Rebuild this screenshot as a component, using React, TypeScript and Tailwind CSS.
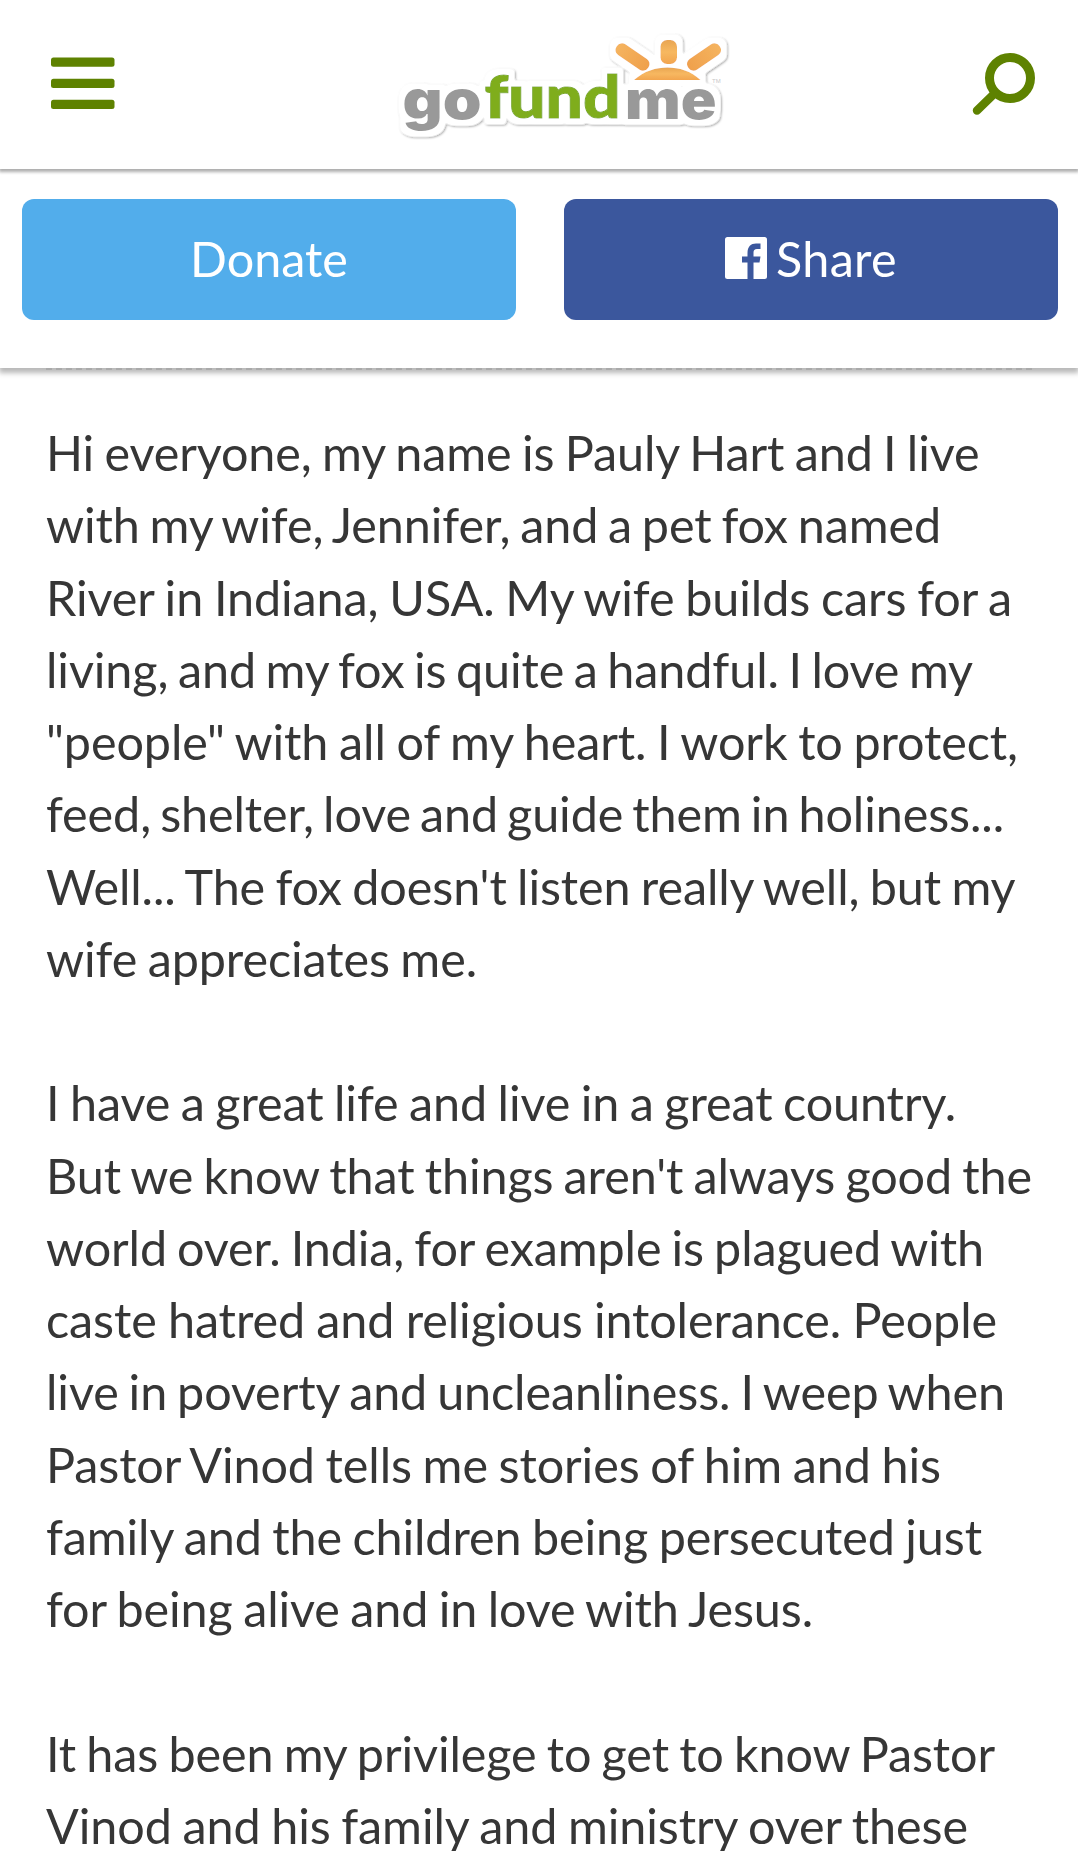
import React from "react";

interface StoryLine {
  text: string;
  width: number;
}

const STORY: StoryLine[][] = [
  [
    { text: "Hi everyone, my name is Pauly Hart and I live", width: 933.5 },
    { text: "with my wife, Jennifer, and a pet fox named", width: 895 },
    { text: "River in Indiana, USA. My wife builds cars for a", width: 966 },
    { text: "living, and my fox is quite a handful. I love my", width: 927 },
    { text: '"people" with all of my heart. I work to protect,', width: 972 },
    { text: "feed, shelter, love and guide them in holiness...", width: 958 },
    { text: "Well... The fox doesn't listen really well, but my", width: 969.5 },
    { text: "wife appreciates me.", width: 431 },
  ],
  [
    { text: "I have a great life and live in a great country.", width: 910 },
    { text: "But we know that things aren't always good the", width: 986 },
    { text: "world over. India, for example is plagued with", width: 938 },
    { text: "caste hatred and religious intolerance. People", width: 951 },
    { text: "live in poverty and uncleanliness. I weep when", width: 959 },
    { text: "Pastor Vinod tells me stories of him and his", width: 895 },
    { text: "family and the children being persecuted just", width: 936 },
    { text: "for being alive and in love with Jesus.", width: 767 },
  ],
  [
    { text: "It has been my privilege to get to know Pastor", width: 949 },
    { text: "Vinod and his family and ministry over these", width: 922 },
  ],
];

const MenuIcon = () => (
  <svg width="64" height="53" viewBox="0 0 64 53" fill="#5e8200">
    <rect y="0.5" width="63.500" height="9.2" rx="2.5" />
    <rect y="21.700" width="63.500" height="9.2" rx="2.5" />
    <rect y="42.800" width="63.500" height="9.2" rx="2.5" />
  </svg>
);

const SearchIcon = () => (
  <svg width="64" height="64" viewBox="0 0 64 64" fill="none" stroke="#5e8200">
    <circle cx="38" cy="26" r="20.5" strokeWidth="9" />
    <path d="M23 41L5 58.500" strokeWidth="8.500" strokeLinecap="round" />
  </svg>
);

const LogoShapes = () => (
  <>
    <g fontFamily="Inter, sans-serif" fontSize="54" fontWeight="900">
      <text x="13.500" y="98.500" fill="#999999" textLength="79" lengthAdjust="spacingAndGlyphs">
        go
      </text>
      <text x="236" y="98.500" fill="#999999" textLength="91.500" lengthAdjust="spacingAndGlyphs">
        me
      </text>
    </g>
    <text
      x="95.500"
      y="98"
      fill="#7fad1f"
      stroke="#7fad1f"
      strokeWidth="1"
      fontFamily="Lato, sans-serif"
      fontSize="58.500"
      fontWeight="900"
      textLength="136"
      lengthAdjust="spacingAndGlyphs"
    >
      fund
    </text>
    <path d="M245 60C255 51 267 47.500 278.500 47.500S302 51 311.500 60Z" fill="url(#sun)" />
    <rect x="271.500" y="20" width="16.500" height="24" rx="6.500" fill="url(#sun)" />
    <rect x="-19" y="-6.500" width="38" height="13" rx="6" fill="url(#ray)" transform="translate(243.500 37) rotate(34)" />
    <rect x="-19" y="-6.500" width="38" height="13" rx="6" fill="url(#ray)" transform="translate(315 37) rotate(146)" />
  </>
);

const Logo = () => (
  <svg width="350" height="130" viewBox="0 0 350 130">
    <defs>
      <linearGradient id="sun" x1="0" y1="0" x2="0" y2="1">
        <stop offset="0" stopColor="#e8a552" />
        <stop offset="0.5" stopColor="#f7b860" />
        <stop offset="1" stopColor="#f2a54f" />
      </linearGradient>
      <linearGradient id="ray" x1="0" y1="0" x2="1" y2="0">
        <stop offset="0" stopColor="#f5b45f" />
        <stop offset="1" stopColor="#efa04c" />
      </linearGradient>
      {/* white die-cut border behind the artwork */}
      <filter id="sticker" x="-5%" y="-15%" width="110%" height="130%">
        <feMorphology in="SourceAlpha" operator="dilate" radius="4.500" result="fat" />
        <feGaussianBlur in="fat" stdDeviation="1.600" result="soft" />
        <feComponentTransfer in="soft" result="edge">
          <feFuncA type="linear" slope="3" intercept="-0.4" />
        </feComponentTransfer>
        <feFlood floodColor="#ffffff" />
        <feComposite in2="edge" operator="in" result="white" />
        <feDropShadow in="white" dx="1" dy="1" stdDeviation="0.8" floodColor="#000000" floodOpacity="0.38" result="border" />
        <feMerge>
          <feMergeNode in="border" />
          <feMergeNode in="SourceGraphic" />
        </feMerge>
      </filter>
    </defs>
    <g filter="url(#sticker)">
      <LogoShapes />
    </g>
    <text x="323" y="62.500" fontFamily="Liberation Sans, sans-serif" fontSize="6" fill="#c8c8c8">
      TM
    </text>
  </svg>
);

const FacebookIcon = () => (
  <svg width="42" height="42" viewBox="0 0 42 42">
    <rect width="42" height="42" rx="2.500" fill="#fff" />
    <path
      d="M22.500 42V25.500H17V19.500H22.500V16C22.500 9.500 26 6.500 31 6.500H35.500V12H32C29.500 12 28.500 13.500 28.500 15.500V19.500H35.500L34.500 25.500H28.500V42Z"
      fill="#3b579d"
    />
  </svg>
);

const buttonClass =
  "flex h-[121px] items-center justify-center rounded-xl pb-[3px] text-[48.5px] text-white";

export default function App() {
  return (
    <div className="h-[1851px] w-[1078px] overflow-hidden bg-white font-['Lato',sans-serif] text-[#363636]">
      <header className="relative z-20 flex h-[169px] items-start justify-between bg-white pl-[51px] pr-[42px] shadow-[0_2px_3px_1px_rgba(0,0,0,0.32)]">
        <button className="mt-[57px]" aria-label="Menu">
          <MenuIcon />
        </button>
        <a href="#" className="ml-10 mt-5" aria-label="gofundme">
          <Logo />
        </a>
        <button className="mt-[52px]" aria-label="Search">
          <SearchIcon />
        </button>
      </header>

      <div className="relative z-10 grid h-[199px] grid-cols-2 items-start gap-12 bg-white pl-[22px] pr-5 pt-[30px] shadow-[0_4px_5px_1px_rgba(0,0,0,0.28)]">
        <button className={`${buttonClass} bg-[#52adeb]`}>Donate</button>
        <button className={`${buttonClass} gap-[9px] bg-[#3b579d]`}>
          <FacebookIcon />
          <span className="tracking-[0.3px]">Share</span>
        </button>
      </div>

      <main className="px-[46px]">
        <div className="relative z-10 border-t-2 border-dashed border-[#aaaaaa]" />
        <article className="flex flex-col gap-[72.26px] pt-[46px] text-[48.5px] leading-[72.26px] tracking-[-0.1px] [word-spacing:-5px]">
          {STORY.map((lines, i) => (
            <p key={i} className="whitespace-nowrap">
              {lines.map((line) => (
                <span
                  key={line.text}
                  className="block [text-align-last:justify]"
                  style={{ width: line.width }}
                >
                  {line.text}
                </span>
              ))}
            </p>
          ))}
        </article>
      </main>
    </div>
  );
}
